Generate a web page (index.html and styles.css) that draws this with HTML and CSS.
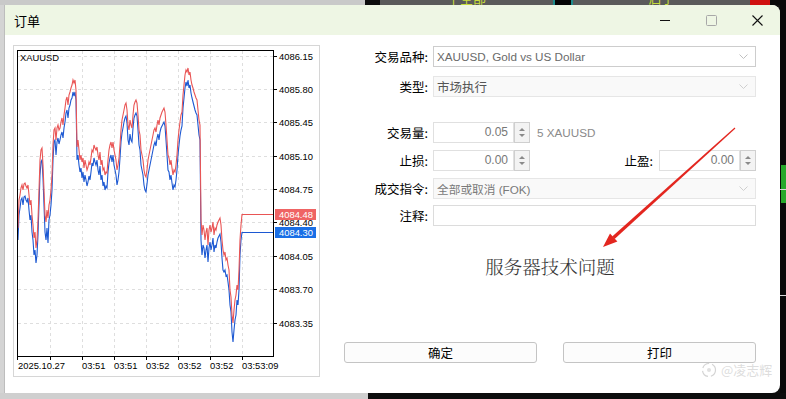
FILE: index.html
```html
<!DOCTYPE html>
<html lang="zh-CN">
<head>
<meta charset="utf-8">
<title>订单</title>
<link rel="stylesheet" href="styles.css">
</head>
<body>
<div class="screen">
  <div class="topstrip">
    <div class="ts-gray"></div>
    <div class="ts-black"></div>
    <div class="ts-btn"><span>平全部</span></div>
    <div class="ts-sep"></div>
    <div class="ts-btn ts-btn2"><span>启手</span></div>
    <div class="ts-red"></div>
  </div>
  <div class="middle">
    <div class="leftstrip"></div>
    <div class="dialog">
      <div class="titlebar">
        <span class="title">订单</span>
        <div class="controls">
          <div class="ctl"><svg width="10" height="10" viewBox="0 0 10 10"><line x1="0" y1="5.5" x2="10" y2="5.5" stroke="#111" stroke-width="1"/></svg></div>
          <div class="ctl"><svg width="11" height="11" viewBox="0 0 11 11"><rect x="0.5" y="0.5" width="10" height="10" rx="1" fill="none" stroke="#a8a8a8" stroke-width="1"/></svg></div>
          <div class="ctl"><svg width="11" height="11" viewBox="0 0 11 11"><path d="M0.5 0.5 L10.5 10.5 M10.5 0.5 L0.5 10.5" stroke="#111" stroke-width="1.1" fill="none"/></svg></div>
        </div>
      </div>
      <div class="body">
        <div class="chartpanel">
          <svg class="chart" width="305" height="330" viewBox="14 46 305 330">
            <rect x="17.5" y="50.5" width="256" height="306" fill="#fff" stroke="none"/>
            <g stroke="#dedede" stroke-width="1" stroke-dasharray="3,3">
              <line x1="18" y1="56.5" x2="273" y2="56.5"/>
              <line x1="18" y1="89.5" x2="273" y2="89.5"/>
              <line x1="18" y1="122.5" x2="273" y2="122.5"/>
              <line x1="18" y1="156.5" x2="273" y2="156.5"/>
              <line x1="18" y1="189.5" x2="273" y2="189.5"/>
              <line x1="18" y1="222.5" x2="273" y2="222.5"/>
              <line x1="18" y1="256.5" x2="273" y2="256.5"/>
              <line x1="18" y1="289.5" x2="273" y2="289.5"/>
              <line x1="18" y1="323.5" x2="273" y2="323.5"/>
              <line x1="50.5" y1="51" x2="50.5" y2="356"/>
              <line x1="82.5" y1="51" x2="82.5" y2="356"/>
              <line x1="114.5" y1="51" x2="114.5" y2="356"/>
              <line x1="146.5" y1="51" x2="146.5" y2="356"/>
              <line x1="178.5" y1="51" x2="178.5" y2="356"/>
              <line x1="210.5" y1="51" x2="210.5" y2="356"/>
              <line x1="242.5" y1="51" x2="242.5" y2="356"/>
            </g>
            <polyline fill="none" stroke="#1c58d2" stroke-width="1.1" points="18,240 18.5,228 19,215 20,208 21,200 22,198 23,205 24,197 25,196 26,200 27,202 28,198 29,210 30,220 31,215 32,232 33,240 34,255 35,250 36,263 37,255 38,235 39,205 40,175 41,162 42,160 43,178 44,205 45,232 46,240 47,228 48,243 49,220 50,215 51,205 52,190 53,160 54,142 55,140 56,155 57,142 58,138 59,144 60,140 61,135 62,132 63,138 64,128 65,122 66,113 67,110 68,118 69,108 70,105 71,100 72,98 73,92 74,96 75,92 76,100 77,160 78,155 79,165 80,172 81,168 82,178 83,172 84,182 85,175 86,180 87,186 88,182 89,176 90,180 91,172 92,163 93,166 94,158 95,162 96,165 97,160 98,170 99,175 100,166 101,180 102,175 103,186 104,182 105,190 106,186 107,188 108,172 109,163 110,158 111,155 112,162 113,155 114,165 115,170 116,175 117,185 118,180 119,172 120,158 121,142 122,133 123,128 124,122 125,118 126,116 127,123 128,140 129,145 130,134 131,140 132,142 133,128 134,118 135,115 136,113 137,116 138,130 139,145 140,150 141,165 142,170 143,175 144,185 145,190 146,192 147,184 148,175 149,170 150,165 151,160 152,155 153,150 154,145 155,142 156,146 157,138 158,134 159,140 160,132 161,128 162,126 163,124 164,122 165,126 166,140 167,155 168,170 169,172 170,180 171,175 172,183 173,190 174,185 175,187 176,180 177,170 178,155 179,145 180,136 181,130 182,126 183,108 184,98 185,88 186,82 187,86 188,80 189,88 190,85 191,93 192,98 193,102 194,106 195,110 196,113 197,115 198,125 199,135 200,140 201,240 202,255 203,245 204,248 205,258 206,250 207,245 208,262 209,248 210,242 211,250 212,245 213,238 214,252 215,245 216,248 217,242 218,238 219,236 220,234 221,242 222,258 223,270 224,272 225,270 226,276 227,275 228,282 229,290 230,305 231,312 232,332 233,342 234,330 235,320 236,315 237,300 238,305 239,290 240,255 241,240 242,232.5 273,232.5"/>
            <polyline fill="none" stroke="#e95555" stroke-width="1.1" points="18,228 18.5,215 19,200 20,195 21,188 22,185 23,190 24,184 25,183 26,186 27,188 28,185 29,195 30,205 31,200 32,215 33,225 34,238 35,232 36,248 37,240 38,220 39,190 40,160 41,150 42,148 43,165 44,190 45,215 46,222 47,210 48,218 49,205 50,200 51,190 52,175 53,145 54,130 55,128 56,140 57,128 58,125 59,130 60,128 61,122 62,118 63,125 64,115 65,108 66,100 67,97 68,105 69,95 70,92 71,88 72,85 73,80 74,83 75,80 76,90 77,147 78,140 79,150 80,160 81,155 82,162 83,158 84,168 85,160 86,165 87,170 88,167 89,162 90,165 91,158 92,150 93,152 94,145 95,148 96,150 97,147 98,155 99,160 100,152 101,165 102,160 103,170 104,168 105,175 106,172 107,173 108,160 109,150 110,145 111,142 112,148 113,142 114,150 115,155 116,160 117,170 118,165 119,158 120,145 121,130 122,120 123,115 124,110 125,105 126,103 127,110 128,125 129,130 130,120 131,125 132,128 133,115 134,105 135,102 136,100 137,103 138,115 139,130 140,135 141,150 142,155 143,160 144,170 145,175 146,177 147,170 148,160 149,155 150,150 151,145 152,140 153,135 154,130 155,128 156,132 157,125 158,120 159,125 160,118 161,115 162,112 163,110 164,108 165,112 166,125 167,140 168,155 169,158 170,165 171,160 172,168 173,175 174,170 175,172 176,165 177,155 178,140 179,130 180,122 181,115 182,112 183,95 184,85 185,75 186,70 187,72 188,68 189,75 190,72 191,80 192,85 193,88 194,92 195,95 196,98 197,100 198,110 199,120 200,125 201,220 202,235 203,225 204,230 205,240 206,232 207,228 208,245 209,230 210,225 211,232 212,228 213,222 214,235 215,228 216,230 217,225 218,222 219,220 220,218 221,225 222,240 223,250 224,255 225,252 226,260 227,258 228,265 229,270 230,290 231,297 232,315 233,323 234,310 235,300 236,295 237,285 238,290 239,270 240,240 241,225 242,214.5 273,214.5"/>
            <rect x="17.5" y="50.5" width="256" height="306" fill="none" stroke="#000" stroke-width="1"/>
            <g stroke="#000" stroke-width="1">
              <line x1="17.5" y1="356" x2="17.5" y2="360"/>
              <line x1="50.5" y1="356" x2="50.5" y2="360"/>
              <line x1="82.5" y1="356" x2="82.5" y2="360"/>
              <line x1="114.5" y1="356" x2="114.5" y2="360"/>
              <line x1="146.5" y1="356" x2="146.5" y2="360"/>
              <line x1="178.5" y1="356" x2="178.5" y2="360"/>
              <line x1="210.5" y1="356" x2="210.5" y2="360"/>
              <line x1="242.5" y1="356" x2="242.5" y2="360"/>
              <line x1="273" y1="56.5" x2="277" y2="56.5"/>
              <line x1="273" y1="89.5" x2="277" y2="89.5"/>
              <line x1="273" y1="122.5" x2="277" y2="122.5"/>
              <line x1="273" y1="156.5" x2="277" y2="156.5"/>
              <line x1="273" y1="189.5" x2="277" y2="189.5"/>
              <line x1="273" y1="222.5" x2="277" y2="222.5"/>
              <line x1="273" y1="256.5" x2="277" y2="256.5"/>
              <line x1="273" y1="289.5" x2="277" y2="289.5"/>
              <line x1="273" y1="323.5" x2="277" y2="323.5"/>
            </g>
            <text class="sym" x="20" y="61">XAUUSD</text>
            <g class="ax">
              <text x="279" y="60">4086.15</text>
              <text x="279" y="93">4085.80</text>
              <text x="279" y="126">4085.45</text>
              <text x="279" y="160">4085.10</text>
              <text x="279" y="193">4084.75</text>
              <text x="279" y="226">4084.40</text>
              <text x="279" y="260">4084.05</text>
              <text x="279" y="293">4083.70</text>
              <text x="279" y="327">4083.35</text>
              <text x="18" y="369">2025.10.27</text>
              <text x="82" y="369">03:51</text>
              <text x="114" y="369">03:51</text>
              <text x="146" y="369">03:52</text>
              <text x="178" y="369">03:52</text>
              <text x="210" y="369">03:52</text>
              <text x="242" y="369">03:53:09</text>
            </g>
            <rect x="275" y="209" width="41" height="11" fill="#ef6464"/>
            <text class="ax axw" x="279" y="218">4084.48</text>
            <rect x="275" y="227" width="41" height="11" fill="#1a6fe6"/>
            <text class="ax axw" x="279" y="236">4084.30</text>
          </svg>
        </div>
        <div class="form">
          <div class="row r1">
            <label class="lbl">交易品种:</label>
            <div class="field select"><span>XAUUSD, Gold vs US Dollar</span><svg class="chev" width="9" height="5" viewBox="0 0 9 5"><path d="M0.5 0.5 L4.5 4.5 L8.5 0.5" fill="none" stroke="#c0c0c0"/></svg></div>
          </div>
          <div class="row r2">
            <label class="lbl">类型:</label>
            <div class="field select dis dark"><span>市场执行</span><svg class="chev" width="9" height="5" viewBox="0 0 9 5"><path d="M0.5 0.5 L4.5 4.5 L8.5 0.5" fill="none" stroke="#cfcfcf"/></svg></div>
          </div>
          <div class="row r3">
            <label class="lbl">交易量:</label>
            <div class="spin"><div class="spin-in">0.05</div><div class="spin-btns"><span class="up"></span><span class="dn"></span></div></div>
            <span class="unit">5 XAUUSD</span>
          </div>
          <div class="row r4">
            <label class="lbl">止损:</label>
            <div class="spin"><div class="spin-in">0.00</div><div class="spin-btns"><span class="up"></span><span class="dn"></span></div></div>
            <div class="grow"></div>
            <label class="lbl2">止盈:</label>
            <div class="spin"><div class="spin-in">0.00</div><div class="spin-btns"><span class="up"></span><span class="dn"></span></div></div>
          </div>
          <div class="row r5">
            <label class="lbl">成交指令:</label>
            <div class="field select dis"><span>全部或取消 (FOK)</span><svg class="chev" width="9" height="5" viewBox="0 0 9 5"><path d="M0.5 0.5 L4.5 4.5 L8.5 0.5" fill="none" stroke="#cfcfcf"/></svg></div>
          </div>
          <div class="row r6">
            <label class="lbl">注释:</label>
            <div class="field plain"></div>
          </div>
          <div class="message">服务器技术问题</div>
          <div class="buttons">
            <div class="btn">确定</div>
            <div class="btn">打印</div>
          </div>
        </div>
      </div>
    </div>
    <div class="rightstrip">
      <div class="rs-green"></div>
      <div class="rs-line rs-l1"></div>
      <div class="rs-line rs-l2"></div>
    </div>
  </div>
  <div class="bottomstrip">
    <div class="bs-gray"></div>
    <div class="bs-dark"></div>
  </div>

  <svg class="arrow" width="786" height="399" viewBox="0 0 786 399">
    <polygon fill="#e3261f" points="734.6,127.6 735.4,128.4 614.6,239 612.2,236.4"/>
    <polygon fill="#e3261f" points="603,247 617.4,241.6 610,233.4"/>
  </svg>
  <div class="watermark">
    <svg width="16" height="16" viewBox="0 0 16 16"><circle cx="8" cy="8" r="6.5" fill="none" stroke="#d4d4d4" stroke-width="1.2" stroke-dasharray="8,3"/><circle cx="8" cy="8" r="2" fill="#e0e0e0"/></svg>
    <span>@凌志辉</span>
  </div>
</div>
</body>
</html>
```

FILE: styles.css
```css
* { box-sizing: border-box; }
html, body { margin: 0; padding: 0; }
body {
  background: #111;
  font-family: "Noto Sans CJK SC", "Noto Sans", sans-serif;
}
.screen {
  position: relative;
  width: 786px;
  height: 399px;
  overflow: hidden;
  display: flex;
  flex-direction: column;
}

/* background window strips */
.topstrip { height: 5px; display: flex; flex: none; }
.ts-gray { width: 365px; background: #c9c9c9; }
.ts-black { width: 15px; background: #0d0d0d; }
.ts-btn { width: 173px; background: #5a5a5a; overflow: hidden; text-align: center; }
.ts-btn span { display: block; color: #c6dc3c; font-size: 13px; line-height: 13px; margin-top: -9px; }
.ts-btn2 { width: 177px; }
.ts-sep { width: 20px; background: #050505; border-left: 2px solid #1d8c8c; border-right: 2px solid #1d8c8c; }
.ts-red { flex: 1; background: linear-gradient(90deg, #d01010 0 20px, #0a0a0a 20px); }

.middle { display: flex; height: 388px; flex: none; }
.leftstrip { width: 5px; background: #d4d4d4; border-right: 1px solid #bdbdbd; }
.rightstrip { flex: 1; background: #0a0a0a; position: relative; }
.rs-green { position: absolute; left: 1px; top: 160px; width: 5px; height: 38px; background: #27a82a; }
.rs-line { position: absolute; left: 0; width: 6px; height: 1px; background: #d8d8d8; }
.rs-l1 { top: 184px; }
.rs-l2 { top: 290px; }

.bottomstrip { flex: 1; display: flex; }
.bs-gray { width: 368px; background: #cfcfcf; }
.bs-dark { flex: 1; background: #0d0d0d; }

/* dialog */
.dialog {
  width: 775px;
  background: #fff;
  border-radius: 0 8px 8px 0;
  display: flex;
  flex-direction: column;
  overflow: hidden;
}
.titlebar {
  height: 30px;
  flex: none;
  background: #eef6e4;
  display: flex;
  align-items: center;
}
.title { padding-left: 9px; font-size: 13px; color: #000; }
.controls { margin-left: auto; display: flex; }
.ctl { width: 46px; height: 30px; display: flex; align-items: center; justify-content: center; }

.body {
  flex: 1;
  display: flex;
  padding: 10px 24px 0 8px;
}
.chartpanel {
  width: 307px;
  height: 332px;
  border: 1px solid #d6d6d6;
  flex: none;
}
.chart { display: block; }
.chart text { font-family: "Liberation Sans", Arial, sans-serif; font-size: 9.4px; fill: #000; }
.chart .axw { fill: #fff; }

/* form */
.form {
  width: 412px;
  margin-left: 24px;
  padding-top: 1px;
  display: flex;
  flex-direction: column;
}
.row { display: flex; align-items: center; height: 21px; }
.r2 { margin-top: 9px; }
.r3 { margin-top: 25px; }
.r4 { margin-top: 7px; }
.r5 { margin-top: 7px; }
.r6 { margin-top: 6px; }
.lbl {
  width: 84px;
  text-align: right;
  font-size: 12.5px;
  color: #000;
  margin-right: 5px;
  flex: none;
}
.lbl2 { font-size: 12.5px; color: #000; margin-right: 6px; }
.grow { flex: 1; }
.field {
  flex: 1;
  height: 21px;
  border: 1px solid #cdcdcd;
  background: #fff;
  display: flex;
  align-items: center;
  padding: 0 7px 0 3px;
  font-family: "Liberation Sans", "Noto Sans CJK SC", sans-serif;
  font-size: 11.7px;
  color: #6a6a6a;
}
.field span { flex: 1; white-space: nowrap; }
.field.dis { border-color: #e6e6e6; background: #f9f9f9; color: #7a7a7a; }
.field.dark { color: #555; font-family: "Noto Sans CJK SC", sans-serif; font-size: 12.5px; }
.field.plain { border-color: #dcdcdc; }
.chev { flex: none; }

.spin { display: flex; width: 97px; height: 21px; flex: none; }
.spin-in {
  width: 81px;
  border: 1px solid #e0e0e0;
  text-align: right;
  padding-right: 5px;
  font-family: "Liberation Sans", sans-serif;
  font-size: 12px;
  line-height: 19px;
  color: #777;
}
.spin-btns {
  width: 16px;
  border: 1px solid #cfcfcf;
  background: #f3f3f3;
  display: flex;
  flex-direction: column;
  align-items: center;
  justify-content: center;
  gap: 3px;
}
.spin-btns .up { width: 0; height: 0; border-left: 3px solid transparent; border-right: 3px solid transparent; border-bottom: 3px solid #8a8a8a; }
.spin-btns .dn { width: 0; height: 0; border-left: 3px solid transparent; border-right: 3px solid transparent; border-top: 3px solid #8a8a8a; }
.unit { margin-left: 7px; font-family: "Liberation Sans", sans-serif; font-size: 11.7px; color: #8a8a8a; }

.message {
  margin-top: 28px;
  text-align: center;
  font-family: "Noto Serif CJK SC", "Noto Sans CJK SC", serif;
  font-size: 18.5px;
  line-height: 24px;
  color: #333;
  font-weight: 300;
}
.buttons { margin-top: 64px; display: flex; justify-content: space-between; }
.btn {
  width: 193px;
  height: 21px;
  border: 1px solid #c4c4c4;
  border-radius: 3px;
  background: #fcfcfc;
  display: flex;
  align-items: center;
  justify-content: center;
  font-size: 12.5px;
  color: #000;
}

/* overlays */
.arrow { position: absolute; left: 0; top: 0; pointer-events: none; }
.watermark {
  position: absolute;
  left: 701px;
  top: 360px;
  display: flex;
  align-items: center;
  gap: 4px;
  color: rgba(215, 215, 215, 0.85);
  font-size: 13px;
}
```
